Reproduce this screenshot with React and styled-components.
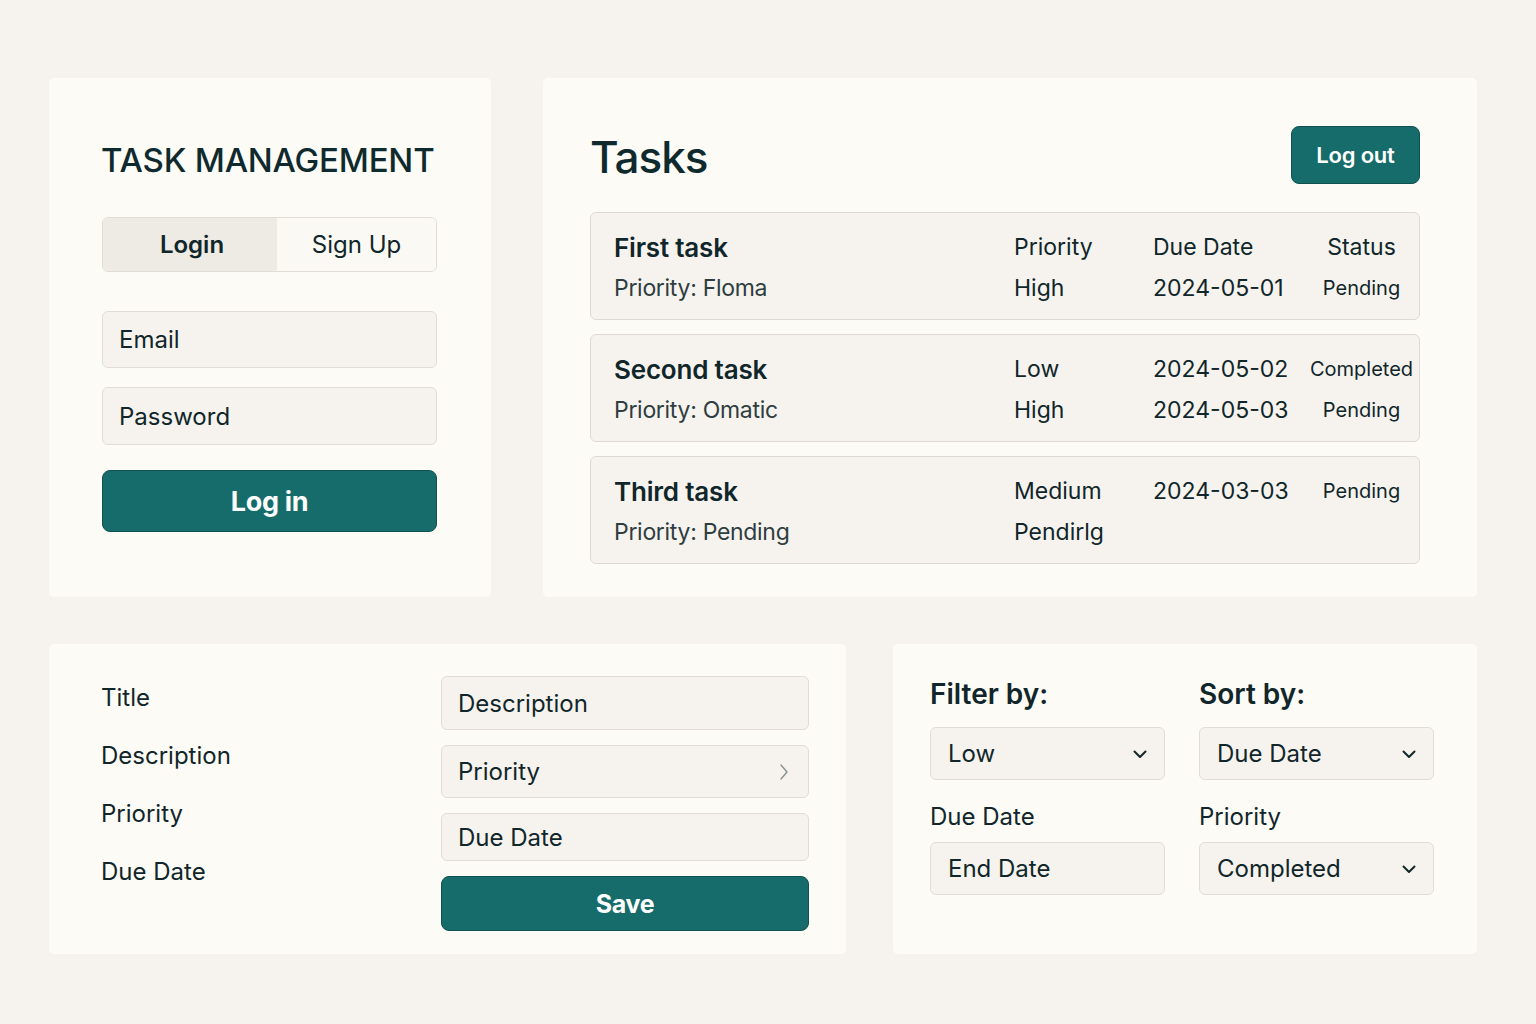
import React from "react";
import styled, { createGlobalStyle } from "styled-components";

const GlobalStyle = createGlobalStyle`
  body {
    margin: 0;
    background: #f6f3ee;
    font-family: Inter, "Noto Sans", "Liberation Sans", sans-serif;
    color: #10262a;
  }
`;

const tasks = [
  {
    title: "First task",
    sub: "Priority: Floma",
    lines: [
      ["Priority", "Due Date", "Status"],
      ["High", "2024-05-01", "Pending"],
    ],
  },
  {
    title: "Second task",
    sub: "Priority: Omatic",
    lines: [
      ["Low", "2024-05-02", "Completed"],
      ["High", "2024-05-03", "Pending"],
    ],
  },
  {
    title: "Third task",
    sub: "Priority: Pending",
    lines: [
      ["Medium", "2024-03-03", "Pending"],
      ["Pendirlg", "", ""],
    ],
  },
];

const ChevronDown = () => (
  <svg width="16" height="16" viewBox="0 0 16 16" fill="none">
    <path d="M2.5 5.5L8 11L13.5 5.5" stroke="#10262a" strokeWidth="2" strokeLinecap="round" strokeLinejoin="round" />
  </svg>
);

const ChevronRight = () => (
  <svg width="12" height="18" viewBox="0 0 12 18" fill="none">
    <path d="M3 2L9 9L3 16" stroke="#8a9193" strokeWidth="1.4" strokeLinecap="round" strokeLinejoin="round" />
  </svg>
);

const App = () => {
  return (
    <React.Fragment>
      <GlobalStyle />
      <Page>
        <Row>
          <LoginCard>
            <Brand>TASK MANAGEMENT</Brand>
            <Segment>
              <SegmentItem active>Login</SegmentItem>
              <SegmentItem>Sign Up</SegmentItem>
            </Segment>
            <FieldStack>
              <Field height={57}>Email</Field>
              <Field height={58}>Password</Field>
            </FieldStack>
            <PrimaryButton height={62} size={27}>Log in</PrimaryButton>
          </LoginCard>

          <TasksCard>
            <TasksHeader>
              <TasksTitle>Tasks</TasksTitle>
              <LogoutButton>Log out</LogoutButton>
            </TasksHeader>
            <TaskList>
              {tasks.map((t) => (
                <TaskRow key={t.title}>
                  <TaskTitle>{t.title}</TaskTitle>
                  <Cell>{t.lines[0][0]}</Cell>
                  <Cell>{t.lines[0][1]}</Cell>
                  <StatusCell small={t.lines[0][2] !== "Status"}>{t.lines[0][2]}</StatusCell>
                  <TaskSub>{t.sub}</TaskSub>
                  <Cell>{t.lines[1][0]}</Cell>
                  <Cell>{t.lines[1][1]}</Cell>
                  <StatusCell small>{t.lines[1][2]}</StatusCell>
                </TaskRow>
              ))}
            </TaskList>
          </TasksCard>
        </Row>

        <Row>
          <EditCard>
            <LabelColumn>
              <FormLabel>Title</FormLabel>
              <FormLabel>Description</FormLabel>
              <FormLabel>Priority</FormLabel>
              <FormLabel>Due Date</FormLabel>
            </LabelColumn>
            <InputColumn>
              <Field height={54}>Description</Field>
              <Field height={53}>
                Priority
                <ChevronRight />
              </Field>
              <Field height={48}>Due Date</Field>
              <PrimaryButton height={55} size={25}>Save</PrimaryButton>
            </InputColumn>
          </EditCard>

          <FilterCard>
            <FilterColumn>
              <FilterHeading>Filter by:</FilterHeading>
              <Select>
                Low
                <ChevronDown />
              </Select>
              <FilterLabel>Due Date</FilterLabel>
              <Select>End Date</Select>
            </FilterColumn>
            <FilterColumn>
              <FilterHeading>Sort by:</FilterHeading>
              <Select>
                Due Date
                <ChevronDown />
              </Select>
              <FilterLabel>Priority</FilterLabel>
              <Select>
                Completed
                <ChevronDown />
              </Select>
            </FilterColumn>
          </FilterCard>
        </Row>
      </Page>
    </React.Fragment>
  );
};

const Page = styled.div`
  width: 1536px;
  height: 1024px;
  box-sizing: border-box;
  padding: 78px 59px 0 49px;
  display: flex;
  flex-direction: column;
  gap: 47px;
`;

const Row = styled.div`
  display: flex;
  justify-content: space-between;
`;

const Card = styled.div`
  background: #fdfbf6;
  border-radius: 5px;
  box-sizing: border-box;
`;

const LoginCard = styled(Card)`
  width: 442px;
  height: 519px;
  padding: 61px 54px 0 53px;
  display: flex;
  flex-direction: column;
`;

const Brand = styled.h1`
  margin: 0 0 36px -1px;
  font-size: 33px;
  line-height: 42px;
  font-weight: 500;
  letter-spacing: -0.2px;
  color: #0f2a2e;
  white-space: nowrap;
`;

const Segment = styled.div`
  display: flex;
  height: 55px;
  border: 1px solid #e1ddd6;
  border-radius: 6px;
  overflow: hidden;
  box-sizing: border-box;
  margin-bottom: 39px;
`;

const SegmentItem = styled.div`
  flex: 0 0 ${(p) => (p.active ? "170px" : "auto")};
  flex-grow: ${(p) => (p.active ? 0 : 1)};
  display: flex;
  align-items: center;
  justify-content: center;
  font-size: 24px;
  font-weight: ${(p) => (p.active ? 600 : 400)};
  background: ${(p) => (p.active ? "#eeeae4" : "#fbf9f4")};
  color: #10262a;
  ${(p) => (p.active ? "padding-left: 4px;" : "padding-left: 0;")}
`;

const FieldStack = styled.div`
  display: flex;
  flex-direction: column;
  gap: 19px;
  margin-bottom: 25px;
`;

const Field = styled.div`
  height: ${(p) => p.height}px;
  box-sizing: border-box;
  display: flex;
  align-items: center;
  justify-content: space-between;
  padding: 0 18px 0 16px;
  background: #f6f3ee;
  border: 1px solid #e1ddd6;
  border-radius: 6px;
  font-size: 24px;
  color: #10262a;
`;

const PrimaryButton = styled.div`
  height: ${(p) => p.height}px;
  box-sizing: border-box;
  display: flex;
  align-items: center;
  justify-content: center;
  background: #166c6b;
  border: 1px solid #0e5150;
  border-radius: 8px;
  color: #ffffff;
  font-size: ${(p) => p.size}px;
  font-weight: 700;
  letter-spacing: -0.3px;
`;

const TasksCard = styled(Card)`
  width: 934px;
  height: 519px;
  padding: 48px 57px 0 47px;
`;

const TasksHeader = styled.div`
  height: 58px;
  display: flex;
  align-items: center;
  justify-content: space-between;
  margin-bottom: 28px;
`;

const TasksTitle = styled.h2`
  margin: 0;
  font-size: 44px;
  line-height: 52px;
  font-weight: 500;
  color: #0f2a2e;
  letter-spacing: -1px;
  padding-top: 4px;
`;

const LogoutButton = styled.div`
  width: 129px;
  height: 58px;
  box-sizing: border-box;
  display: flex;
  align-items: center;
  justify-content: center;
  background: #166c6b;
  border: 1px solid #0e5150;
  border-radius: 8px;
  color: #ffffff;
  font-size: 22px;
  font-weight: 600;
  letter-spacing: -0.2px;
`;

const TaskList = styled.div`
  display: flex;
  flex-direction: column;
  gap: 14px;
`;

const TaskRow = styled.div`
  height: 108px;
  box-sizing: border-box;
  background: #f6f3ee;
  border: 1px solid #dedad3;
  border-radius: 6px;
  padding: 19px 0 0 23px;
  display: grid;
  grid-template-columns: 400px 139px 147px 1fr;
  grid-template-rows: 30px 30px;
  row-gap: 11px;
  align-items: center;
`;

const TaskTitle = styled.div`
  font-size: 26px;
  font-weight: 600;
  letter-spacing: -0.2px;
  color: #10262a;
`;

const TaskSub = styled.div`
  font-size: 23px;
  letter-spacing: -0.3px;
  color: #2e3d40;
`;

const Cell = styled.div`
  font-size: 23px;
  color: #10262a;
  white-space: nowrap;
`;

const StatusCell = styled.div`
  text-align: center;
  font-size: ${(p) => (p.small ? 20 : 23)}px;
  color: #10262a;
  white-space: nowrap;
  padding-left: 4px;
`;

const EditCard = styled(Card)`
  width: 797px;
  height: 310px;
  padding: 32px 37px 0 52px;
  display: flex;
  justify-content: space-between;
`;

const LabelColumn = styled.div`
  display: flex;
  flex-direction: column;
  gap: 28px;
  padding-top: 7px;
`;

const FormLabel = styled.div`
  font-size: 24px;
  line-height: 30px;
  color: #10262a;
`;

const InputColumn = styled.div`
  width: 368px;
  display: flex;
  flex-direction: column;
  gap: 15px;
`;

const FilterCard = styled(Card)`
  width: 584px;
  height: 310px;
  padding: 33px 43px 0 37px;
  display: flex;
  gap: 34px;
`;

const FilterColumn = styled.div`
  flex: 1;
  display: flex;
  flex-direction: column;
`;

const FilterHeading = styled.div`
  font-size: 28px;
  line-height: 34px;
  font-weight: 600;
  color: #10262a;
  margin-bottom: 16px;
`;

const FilterLabel = styled.div`
  font-size: 24px;
  line-height: 30px;
  color: #10262a;
  margin: 22px 0 10px;
`;

const Select = styled.div`
  height: 53px;
  box-sizing: border-box;
  display: flex;
  align-items: center;
  justify-content: space-between;
  padding: 0 16px 0 17px;
  background: #f6f3ee;
  border: 1px solid #e1ddd6;
  border-radius: 6px;
  font-size: 24px;
  color: #10262a;
`;

export default App;
